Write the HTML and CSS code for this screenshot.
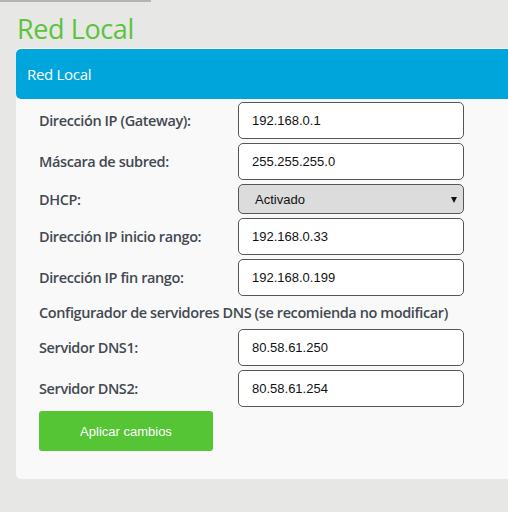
FILE: index.html
```html
<!DOCTYPE html>
<html lang="es">
<head>
<meta charset="utf-8">
<title>Red Local</title>
<link rel="stylesheet" href="styles.css">
</head>
<body>
<div class="topline"></div>
<h1 class="title">Red Local</h1>
<div class="panel">
  <div class="panel-head">Red Local</div>
  <form class="panel-body">
    <div class="row">
      <label class="lbl">Dirección IP (Gateway):</label>
      <input class="field" type="text" value="192.168.0.1">
    </div>
    <div class="row">
      <label class="lbl">Máscara de subred:</label>
      <input class="field" type="text" value="255.255.255.0">
    </div>
    <div class="row row-select">
      <label class="lbl">DHCP:</label>
      <div class="select-wrap">
        <select class="select"><option>Activado</option><option>Desactivado</option></select>
      </div>
    </div>
    <div class="row">
      <label class="lbl">Dirección IP inicio rango:</label>
      <input class="field" type="text" value="192.168.0.33">
    </div>
    <div class="row">
      <label class="lbl">Dirección IP fin rango:</label>
      <input class="field" type="text" value="192.168.0.199">
    </div>
    <div class="subhead">Configurador de servidores DNS (se recomienda no modificar)</div>
    <div class="row">
      <label class="lbl">Servidor DNS1:</label>
      <input class="field" type="text" value="80.58.61.250">
    </div>
    <div class="row">
      <label class="lbl">Servidor DNS2:</label>
      <input class="field" type="text" value="80.58.61.254">
    </div>
    <button class="btn" type="button">Aplicar cambios</button>
  </form>
</div>
</body>
</html>
```

FILE: styles.css
```css
html, body {
  margin: 0;
  padding: 0;
  background: #e7e7e5;
  overflow: hidden;
}
body {
  font-family: "Open Sans", "Noto Sans", sans-serif;
  width: 508px;
  height: 512px;
}
.topline {
  width: 151px;
  height: 2px;
  background: #b4b4b2;
}
.title {
  margin: 0;
  padding: 7px 0 0 17px;
  height: 39px;
  font-size: 27px;
  line-height: 39px;
  font-weight: 400;
  color: #5bc43a;
  letter-spacing: -0.4px;
}
.panel {
  margin-left: 16px;
  width: 492px;
  background: #f9f9f9;
  border-radius: 5px 0 0 5px;
  border-top: 1px solid #ffffff;
}
.panel-head {
  height: 50px;
  line-height: 50px;
  background: #00a6db;
  color: #ffffff;
  font-size: 15px;
  padding-left: 11px;
  border-radius: 5px 0 0 5px;
  letter-spacing: -0.3px;
}
.panel-body {
  margin: 0;
  padding: 3px 0 28px 23px;
  display: flex;
  flex-direction: column;
  gap: 4px;
}
.row {
  display: grid;
  grid-template-columns: 199px 226px;
  align-items: center;
  height: 37px;
}
.row-select {
  height: 30px;
}
.lbl {
  font-size: 14.5px;
  color: #434951;
  font-weight: 600;
  letter-spacing: -0.4px;
}
.field {
  box-sizing: border-box;
  width: 226px;
  height: 37px;
  border: 1px solid #56565a;
  border-radius: 5px;
  background: #ffffff;
  padding: 0 0 0 13px;
  font-family: "Liberation Sans", Arial, sans-serif;
  font-size: 13px;
  color: #111;
  margin: 0;
}
.select-wrap {
  position: relative;
  width: 226px;
  height: 30px;
}
.select-wrap::after {
  content: "";
  position: absolute;
  right: 7px;
  top: 13px;
  width: 0;
  height: 0;
  border-left: 3.5px solid transparent;
  border-right: 3.5px solid transparent;
  border-top: 6px solid #111;
  pointer-events: none;
}
.select {
  -webkit-appearance: none;
  appearance: none;
  box-sizing: border-box;
  width: 226px;
  height: 30px;
  margin: 0;
  border: 1px solid #56565a;
  border-radius: 5px;
  background: #dcdcdc;
  padding: 0 0 0 16px;
  font-family: "Liberation Sans", Arial, sans-serif;
  font-size: 13px;
  color: #111;
}
.subhead {
  height: 25px;
  line-height: 25px;
  font-size: 14.5px;
  color: #434951;
  font-weight: 600;
  letter-spacing: -0.4px;
}
.btn {
  width: 174px;
  height: 40px;
  margin: 0;
  border: none;
  border-radius: 3px;
  background: #55c435;
  color: #ffffff;
  font-family: "Liberation Sans", Arial, sans-serif;
  font-size: 13px;
}
```
